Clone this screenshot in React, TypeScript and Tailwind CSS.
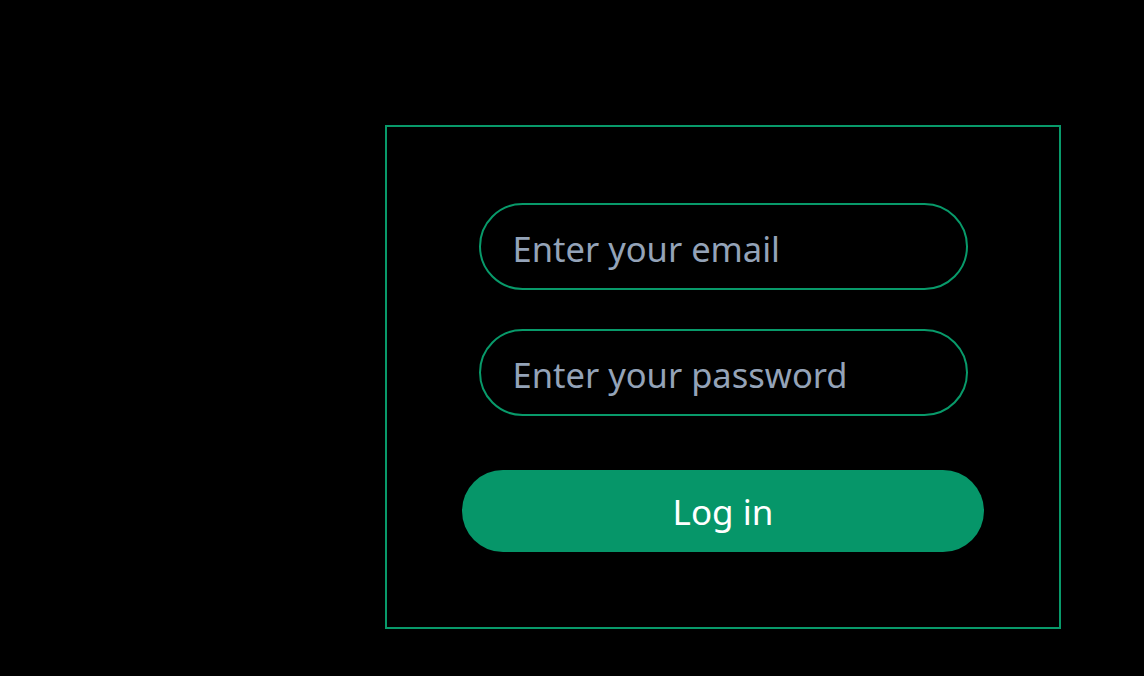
const FONT = { fontFamily: '"Noto Sans", "Open Sans", sans-serif' };

export default function App() {
  return (
    <div className="min-h-[676px] w-full bg-black pt-[125px]" style={FONT}>
      <form
        className="ml-[385px] flex h-[504px] w-[676px] flex-col items-center border-2 border-[#089a6a] px-[75px] pt-[76px]"
        onSubmit={e => e.preventDefault()}
      >
        <input
          type="email"
          placeholder="Enter your email"
          className="h-[87px] w-[489px] rounded-full border-2 border-[#089a6a] bg-transparent pl-[32px] pt-[4px] text-[34.5px] text-slate-200 outline-none placeholder:text-[#94a3b8]"
        />
        <input
          type="password"
          placeholder="Enter your password"
          className="mt-[39px] h-[87px] w-[489px] rounded-full border-2 border-[#089a6a] bg-transparent pl-[32px] pt-[4px] text-[34.5px] text-slate-200 outline-none placeholder:text-[#94a3b8]"
        />
        <button
          type="submit"
          className="mt-[54px] h-[82px] w-[522px] rounded-full bg-[#069669] pt-[3px] text-[35px] text-white"
        >
          Log in
        </button>
      </form>
    </div>
  );
}
